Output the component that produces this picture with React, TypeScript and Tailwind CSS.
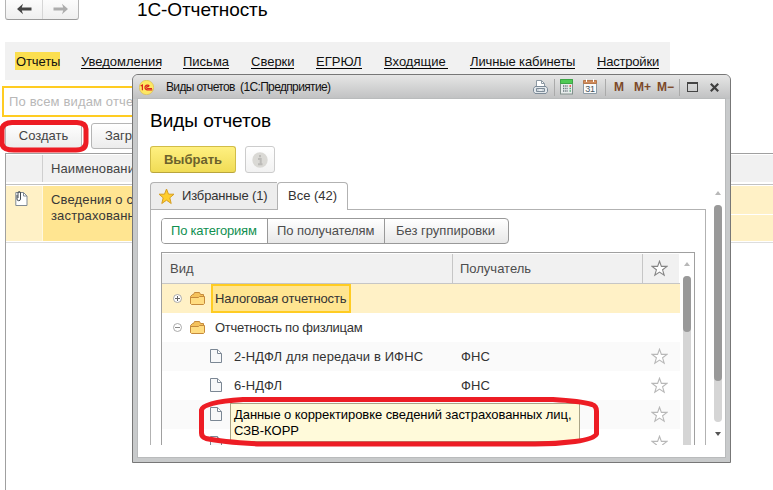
import type { ReactNode } from 'react';
import clsx from 'clsx';

const sections = [
  { label: 'Уведомления', className: 'ml-[21px] w-[80px]' },
  { label: 'Письма', className: 'ml-[22px] w-[46px]' },
  { label: 'Сверки', className: 'ml-[22px] w-[43px]' },
  { label: 'ЕГРЮЛ', className: 'ml-[22px] w-[46px]' },
  { label: 'Входящие', className: 'ml-[22px] w-[64px]' },
  { label: 'Личные кабинеты', className: 'ml-[22px] w-[105px] tracking-[-0.12px]' },
  { label: 'Настройки', className: 'ml-[22px] w-[62px] tracking-[-0.2px]' },
];

const reports = [
  { name: '2-НДФЛ для передачи в ИФНС', receiver: 'ФНС', odd: true },
  { name: '6-НДФЛ', receiver: 'ФНС', odd: false },
  { name: '', receiver: '', odd: true },
  { name: '', receiver: '', odd: false },
];

const Arrow = ({ className }: { className: string }) => (
  <svg width="15" height="12" viewBox="0 0 15 12" className={className}>
    <path d="M0 6 6 .8 4.8 4.5H14.5v3H4.8L6 11.2Z" fill="currentColor" />
  </svg>
);

const StarOutline = ({ className }: { className?: string }) => (
  <svg width="17" height="17" viewBox="0 0 17 17" className={className}>
    <path
      d="M8.5 1.2 10.4 6.4H16L11.6 9.8 13.2 15.3 8.5 12.1 3.8 15.3 5.4 9.8 1 6.4H6.6Z"
      fill="white"
      stroke="currentColor"
      strokeWidth="1.1"
    />
  </svg>
);

const Folder = () => (
  <svg width="15" height="13" viewBox="0 0 15 13" className="shrink-0">
    <path d="M.5 11.5V4.5L2.5 2.5H3.5L4.5.5H9.5L10.5 2.5H13.5V11.5Z" fill="#f5c25c" stroke="#c58a3c" />
    <path d="M.5 5.5H8.5L9.5 4.5H14.5V11.5L13.5 12.5H1.5L.5 11.5Z" fill="#ffdc80" stroke="#c58a3c" />
  </svg>
);

const Page = () => (
  <svg width="12" height="15" viewBox="0 0 12 15" className="shrink-0">
    <path d="M.5.5H7.6L11.5 4.5V13.5H.5Z" fill="#f7f8f9" stroke="#7b8794" />
    <path d="M7.5.8V4.5H11.2" fill="white" stroke="#7b8794" />
  </svg>
);

const Toggle = ({ open }: { open: boolean }) => (
  <svg width="9" height="9" viewBox="0 0 9 9" className="shrink-0">
    <circle cx="4.5" cy="4.5" r="4" fill="white" stroke="#a0a0a0" strokeWidth=".9" />
    <path d={open ? 'M2 4.5H7' : 'M2 4.5H7M4.5 2V7'} stroke={open ? '#888' : '#666'} />
  </svg>
);

const Triangle = ({ down, className }: { down?: boolean; className: string }) => (
  <svg width="6" height="4" viewBox="0 0 6 4" className={className}>
    <path d={down ? 'M0 0H6L3 4Z' : 'M0 4H6L3 0Z'} fill="currentColor" />
  </svg>
);

const MemoryButton = ({ children, className }: { children: ReactNode; className: string }) => (
  <span className={clsx('text-[12px] leading-[14px] font-bold text-[#7c4828]', className)}>{children}</span>
);

const BackgroundPage = () => (
  <div className="flex h-full flex-col">
    <div className="flex h-[42px] items-start pl-[5px]">
      <div className="-mt-[5px] flex h-[25px] w-[74px] rounded-[3px] border border-[#b5b5b5] border-b-[#9a9a9a] bg-linear-to-b from-white to-[#efefef]">
        <div className="flex w-[37px] items-center justify-center border-r border-[#d6d6d6] pt-[2px]">
          <Arrow className="text-[#454545]" />
        </div>
        <div className="flex flex-1 items-center justify-center pt-[2px]">
          <Arrow className="rotate-180 text-[#adadad]" />
        </div>
      </div>
      <h1 className="-mt-[2px] ml-[58px] text-[19px] leading-[23px] tracking-[-0.1px] whitespace-nowrap text-black">
        1С-Отчетность
      </h1>
    </div>

    <nav className="ml-[5px] flex h-[38px] w-[665px] items-center bg-[#f1f1f1] pl-[10px] text-[13px] whitespace-nowrap text-[#111]">
      <span className="h-[18px] w-[45px] bg-[#fbdf50] pl-px leading-[19px] tracking-[-0.1px]">Отчеты</span>
      {sections.map((section) => (
        <span key={section.label} className={clsx('h-[15px] border-b border-black leading-[15px]', section.className)}>
          {section.label}
        </span>
      ))}
    </nav>

    <div className="mt-[6px] ml-[2px] h-[31px] w-[300px] border-2 border-[#fc2] pl-[5px] text-[13px] leading-[27px] tracking-[0.15px] text-[#b8b8b8]">
      По всем видам отчетов
    </div>

    <div className="mt-[6px] flex h-[30px] gap-[9px] pl-[5px] text-[13px] text-[#444]">
      <button className="h-[26px] w-[77px] rounded-[3px] border border-[#b5b5b5] bg-linear-to-b from-white to-[#ececec]">
        Создать
      </button>
      <button className="h-[26px] w-[90px] rounded-[3px] border border-[#b5b5b5] bg-linear-to-b from-white to-[#ececec] pl-[13px] text-left">
        Загрузить
      </button>
    </div>

    <div className="ml-[5px] flex flex-1 flex-col border-t border-l border-[#a0a0a0] text-[13px] text-[#444]">
      <div className="flex h-[31px] border-b border-[#c2c2c2] pt-px pb-[2px]">
        <div className="w-[37px] border-r border-[#cfcfcf] bg-[#f1f1f1]" />
        <div className="flex-1 bg-[#f1f1f1] pl-[8px] leading-[27px] tracking-[0.1px]">Наименование</div>
      </div>
      <div className="flex h-[58px] border-b border-[#ddd] pt-px pb-px">
        <div className="w-[37px] border-r border-[#fff8e0] bg-[#fff1c6] pt-[5px] pl-[9px]">
          <svg width="13" height="15" viewBox="0 0 13 15">
            <path d="M3.5 1.5H8.5L12 5V14.5H.8V1.5Z" fill="white" stroke="#818a93" />
            <path d="M8.5 1.5V5H12" fill="none" stroke="#818a93" />
            <path d="M2 4V8Q2 9.7 3.7 9.7T5.5 8V2Q5.5.6 4.2.6T3 2V7" fill="none" stroke="#424a52" />
          </svg>
        </div>
        <div className="w-[280px] bg-[#ffe591] pt-[6px] pl-[8px] leading-[16px] tracking-[0.15px] text-[#383838]">
          Сведения о сумме
          <br />
          застрахованных
        </div>
        <div className="flex flex-1 flex-col gap-px">
          <div className="h-[28px] bg-[#fff1c6]" />
          <div className="flex-1 bg-[#fff1c6]" />
        </div>
      </div>
    </div>
  </div>
);

const TitleBar = () => (
  <div className="flex h-[24px] items-center rounded-t-[5px] bg-linear-to-b from-[#e6e6e6] to-[#c0c1c2] pl-[6px] text-[#111]">
    <svg width="15" height="15" viewBox="0 0 15 15">
      <circle cx="7.5" cy="7.5" r="7.2" fill="#fde763" stroke="#d8b84a" strokeWidth=".6" />
      <path
        d="M1.7 6 3.4 5V10.3M10.4 6.2Q9.7 5 8.2 5.1 6 5.3 6 7.5T8.4 9.8H13.3M9.6 7Q9.3 6.3 8.5 6.4T7.7 7.5 8.6 8.5H13"
        fill="none"
        stroke="#d9261c"
        strokeWidth="1.2"
      />
    </svg>
    <span className="ml-[12px] w-[373px] text-[12px] tracking-[-0.65px] whitespace-pre">
      Виды отчетов  (1С:Предприятие)
    </span>

    <svg width="17" height="16" viewBox="0 0 17 16" className="-ml-[7px] shrink-0">
      <path d="M4.5 8V1.5H9.5L12.5 4.5V8" fill="white" stroke="#8d99a3" />
      <path d="M9.5 1.5V4.5H12.5" fill="none" stroke="#8d99a3" />
      <path d="M3 7.5H14L15.5 9.5V12.5L14 14.5H3L1.5 12.5V9.5Z" fill="#e3e8ec" stroke="#7d8b98" />
      <path d="M4.5 9.5H12.5V12.5H4.5Z" fill="#cdd5db" stroke="#7d8b98" />
      <path d="M7 11H10" stroke="white" />
    </svg>
    <i className="ml-[5px] h-[17px] w-px bg-[#aaa]" />
    <svg width="13" height="16" viewBox="0 0 13 16" className="ml-[5px] shrink-0">
      <rect x=".5" y=".5" width="12" height="14.5" fill="#e8ecec" stroke="#82908c" />
      <path d="M.5.5H12.5V4.5H.5Z" fill="#4fca55" stroke="#3ca646" />
      <path d="M3 7H8M3 9.5H8M3 12H8" stroke="#64737a" strokeWidth="1.3" strokeDasharray="1.3 .9" />
      <path d="M9.5 7H11" stroke="#e33" strokeWidth="1.4" />
      <path d="M9.5 9.5H11M9.5 12H11" stroke="#5a7" strokeWidth="1.4" />
    </svg>
    <svg width="14" height="16" viewBox="0 0 14 16" className="ml-[10px] shrink-0">
      <path d="M.5 2H13.5V14.5H.5Z" fill="#fbfbfb" stroke="#8c9aa5" />
      <path d="M.5 1.5H13.5V4.5H.5Z" fill="#d18c5c" stroke="#b7794d" />
      <path d="M3.5 0V3M10.5 0V3" stroke="white" />
      <text x="2.2" y="13" fontSize="9" letterSpacing="-.2" fill="#465460">31</text>
    </svg>
    <i className="ml-[8px] h-[17px] w-px bg-[#aaa]" />
    <MemoryButton className="ml-[8px] w-[20px]">M</MemoryButton>
    <MemoryButton className="w-[23px]">M+</MemoryButton>
    <MemoryButton className="w-[21px]">M−</MemoryButton>
    <i className="ml-px h-[17px] w-px bg-[#aaa]" />
    <span className="ml-[7px] h-[10px] w-[11px] shrink-0 border border-t-2 border-[#444]" />
    <svg width="9" height="9" viewBox="0 0 9 9" className="ml-[12px] shrink-0">
      <path d="M.8.8 8.2 8.2M8.2.8.8 8.2" stroke="#3f3f3f" strokeWidth="2.2" />
    </svg>
  </div>
);

const ReportTable = () => (
  <div className="mt-[8px] flex h-[193px] w-[534px] shrink-0 overflow-hidden border-t border-r border-l border-[#a0a0a0] text-[13px] whitespace-nowrap">
    <div className="w-[518px] shrink-0">
      <div className="flex h-[31px] border-b border-[#c6c6c6] pt-px pr-px leading-[29px] text-[#4d4d4d]">
        <div className="w-[290px] bg-[#f1f1f1] pl-[8px]">Вид</div>
        <div className="w-[190px] border-l border-[#c6c6c6] bg-[#f1f1f1] pl-[7px]">Получатель</div>
        <div className="flex flex-1 items-center border-l border-[#c6c6c6] bg-[#f1f1f1] pb-px pl-[8px]">
          <StarOutline className="text-[#858585]" />
        </div>
      </div>

      <div className="flex h-[29px] items-center bg-[#fff1c6] pl-[11px] tracking-[-0.13px]">
        <Toggle open={false} />
        <span className="mr-[6px] ml-[8px] flex">
          <Folder />
        </span>
        <span className="h-[29px] w-[140px] border-2 border-[#fc2] bg-[#ffe591] pl-[2px] leading-[25px] text-[#333]">
          Налоговая отчетность
        </span>
      </div>
      <div className="flex h-[29px] items-center pl-[11px] tracking-[-0.25px] text-[#333]">
        <Toggle open />
        <span className="mr-[10px] ml-[8px] flex">
          <Folder />
        </span>
        Отчетность по физлицам
      </div>

      {reports.map((report, index) => (
        <div
          key={index}
          className={clsx('flex h-[29px] items-center tracking-[0.12px] text-[#333]', report.odd && 'bg-[#fafafa]')}
        >
          <span className="flex w-[72px] pl-[48px]">
            <Page />
          </span>
          <span className="w-[227px]">{report.name}</span>
          <span className="w-[190px]">{report.receiver}</span>
          <StarOutline className="text-[#b8b8b8]" />
        </div>
      ))}
    </div>
    <div className="flex w-[14px] flex-col items-center pt-[9px]">
      <Triangle className="text-[#b8b8b8]" />
      <div className="mt-[10px] flex-1 self-stretch pr-[3px] pl-[3px]">
        <div className="h-full rounded-t-full bg-[#d5d5d5]">
          <div className="h-[56px] rounded-full bg-[#999]" />
        </div>
      </div>
    </div>
  </div>
);

const ReportKindsDialog = () => (
  <div className="absolute top-[74px] left-[132px] flex h-[389px] w-[599px] flex-col rounded-t-[6px] border border-[#777] bg-[#c8cacb]">
    <TitleBar />
    <div className="mx-[5px] mb-[5px] flex h-[358px] bg-white pl-[12px] shadow-[0_0_0_1px_#b9bbbc]">
      <div className="flex w-[556px] shrink-0 flex-col">
        <h2 className="mt-[10px] h-[37px] text-[19px] leading-[24px] whitespace-nowrap text-black">Виды отчетов</h2>
        <div className="flex gap-[9px]">
          <button className="h-[27px] w-[86px] rounded-[3px] border border-[#d1bd48] border-b-[#b9a53d] bg-linear-to-b from-[#fff080] to-[#f0dc55] text-[13px] font-bold text-[#6b622c]">
            Выбрать
          </button>
          <button className="flex h-[27px] w-[30px] items-center justify-center rounded-[3px] border border-[#ccc] bg-linear-to-b from-white to-[#f2f2f2]">
            <svg width="16" height="16" viewBox="0 0 16 16">
              <circle cx="8" cy="8" r="7.7" fill="#dad9d5" />
              <path d="M8 3V5.3M6 7H8.7V12M6 12.3H10.5" stroke="#bcbbb8" strokeWidth="2" fill="none" />
            </svg>
          </button>
        </div>

        <div className="mt-[9px] flex h-[28px] text-[13px] whitespace-nowrap text-[#333]">
          <div className="flex w-[127px] items-center rounded-tl-[4px] border border-r-0 border-[#b2b2b2] bg-[#ededed] pl-[7px] tracking-[-0.15px]">
            <svg width="17" height="17" viewBox="0 0 17 17" className="mr-[7px]">
              <path
                d="M8.5 1 10.5 6.2H16L11.8 9.8 13.2 15.5 8.5 12.2 3.8 15.5 5.2 9.8 1 6.2H6.5Z"
                fill="#ffce2d"
                stroke="#d69e22"
              />
            </svg>
            Избранные (1)
          </div>
          <div className="w-[71px] rounded-t-[4px] border border-b-0 border-[#b2b2b2] pl-[10px] leading-[25px]">
            Все (42)
          </div>
          <div className="flex-1 border-b border-[#b2b2b2]" />
        </div>

        <div className="h-[235px] border-r border-l border-[#b2b2b2] pt-[8px] pl-[10px]">
          <div className="flex h-[26px] w-[348px] overflow-hidden rounded-[4px] border border-[#999] bg-linear-to-b from-white to-[#e8e8e8] text-[13px] leading-[23px] whitespace-nowrap text-[#4d4d4d]">
            <div className="w-[106px] border-r border-[#999] bg-white pl-[9px] tracking-[-0.2px] text-[#109050]">
              По категориям
            </div>
            <div className="w-[117px] border-r border-[#999] pl-[9px] tracking-[-0.05px]">По получателям</div>
            <div className="flex-1 pl-[11px]">Без группировки</div>
          </div>
          <ReportTable />
        </div>
      </div>

      <div className="flex w-[19px] flex-col items-center pt-[92px] pl-[5px]">
        <Triangle className="text-[#b8b8b8]" />
        <div className="mt-[10px] h-[217px] w-[8px] rounded-full bg-[#d5d5d5]">
          <div className="h-[176px] rounded-full bg-[#999]" />
        </div>
        <Triangle down className="mt-[10px] text-[#555]" />
      </div>
    </div>
  </div>
);

export default function App() {
  return (
    <div className="relative h-[490px] w-[773px] overflow-hidden bg-white font-['Liberation_Sans',Arial,sans-serif]">
      <BackgroundPage />
      <ReportKindsDialog />
      <div className="absolute top-[403px] left-[230px] h-[39px] w-[350px] border border-[#a9a486] bg-[#fffada] pt-[3px] pl-[3px] text-[13px] leading-[16px] whitespace-nowrap text-black">
        <span className="tracking-[-0.07px]">Данные о корректировке сведений застрахованных лиц,</span>
        <br />
        СЗВ-КОРР
      </div>
      <svg width="773" height="490" viewBox="0 0 773 490" className="pointer-events-none absolute inset-0">
        <g fill="none" stroke="#ed1c24" strokeWidth="5" strokeLinejoin="round">
          <path d="M12 122.5H77Q86 123 86 129V142Q86 150 76 150H14Q2 150 2 143V130Q2 123 12 122.5Z" />
          <path d="M243 399.5H553Q580 401 592 404.5Q596.5 406 596.5 411V434Q594 439 575 441.5Q556 444 535 444H260Q222 442 206 438.5Q201.5 437 201.5 433V410Q203 402 243 399.5Z" />
        </g>
      </svg>
    </div>
  );
}
